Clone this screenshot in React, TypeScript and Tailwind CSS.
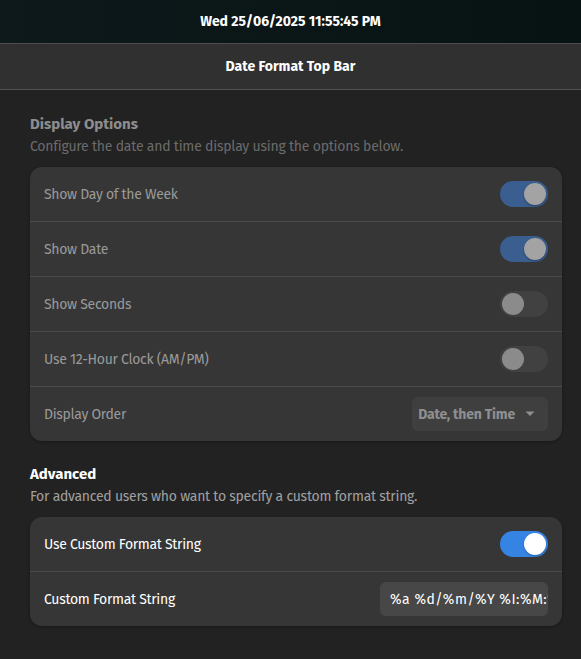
import React from "react";

const font = { fontFamily: '"Fira Sans", Lato, "Noto Sans", sans-serif' };

function Toggle({ on, dim }: { on: boolean; dim?: boolean }) {
  if (on) {
    return (
      <div className={`w-[48px] h-[26px] rounded-full flex items-center justify-end px-[2px] ${dim ? "bg-[#395e8f]" : "bg-[#3584e4]"}`}>
        <div className={`w-[22px] h-[22px] rounded-full ${dim ? "bg-[#a3a3a3]" : "bg-white"} shadow-[0_1px_2px_rgba(0,0,0,0.3)]`} />
      </div>
    );
  }
  return (
    <div className="w-[48px] h-[26px] rounded-full flex items-center justify-start px-[2px] bg-[#414141]">
      <div className="w-[22px] h-[22px] rounded-full bg-[#8b8b8b]" />
    </div>
  );
}

function Row({ label, children, dim, last }: { label: string; children: React.ReactNode; dim?: boolean; last?: boolean }) {
  return (
    <div className={`flex items-center justify-between pl-[14px] pr-[14px] ${last ? "h-[54px]" : "h-[55px] border-b border-[#4a4a4a]"}`}>
      <span className={`text-[14px] tracking-[-0.3px] ${dim ? "text-[#9a9a9a]" : "text-white"}`}>{label}</span>
      {children}
    </div>
  );
}

export default function App() {
  return (
    <div className="w-[581px] h-[659px] bg-[#222222] flex flex-col" style={font}>
      <div className="h-[44px] shrink-0 bg-[linear-gradient(90deg,#0d191a,#0a1616_60%,#071212)] flex items-center justify-center border-b border-[#4d4d4d]">
        <span className="text-white font-bold text-[14px]">Wed 25/06/2025 11:55:45 PM</span>
      </div>
      <div className="h-[46px] shrink-0 bg-[#303030] flex items-center justify-center border-b border-[#525252]">
        <span className="text-white font-bold text-[14px]">Date Format Top Bar</span>
      </div>
      <div className="pl-[30px] pr-[19px] pt-[23px]">
        <div className="text-[15px] font-bold text-[#8d8d8d] leading-[22px]">Display Options</div>
        <div className="text-[14px] tracking-[-0.22px] text-[#6b6b6b] leading-[22px] mt-[1px]">Configure the date and time display using the options below.</div>
        <div className="mt-[9px] rounded-[12px] bg-[#363636] overflow-hidden shadow-[0_1px_3px_rgba(0,0,0,0.3)]">
          <Row label="Show Day of the Week" dim><Toggle on dim /></Row>
          <Row label="Show Date" dim><Toggle on dim /></Row>
          <Row label="Show Seconds" dim><Toggle on={false} /></Row>
          <Row label="Use 12-Hour Clock (AM/PM)" dim><Toggle on={false} /></Row>
          <Row label="Display Order" dim last>
            <div className="w-[136px] h-[34px] rounded-[6px] bg-[#3f3f3f] flex items-center justify-end gap-[10px] pr-[13px]">
              <span className="text-[14px] font-bold tracking-[-0.2px] text-[#8f8f8f]">Date, then Time</span>
              <svg width="10" height="6" viewBox="0 0 10 6"><path d="M0.5 0.5 L9.5 0.5 L5 5 Z" fill="#8f8f8f" /></svg>
            </div>
          </Row>
        </div>
        <div className="mt-[22px] text-[15px] font-bold text-white leading-[22px]">Advanced</div>
        <div className="text-[14px] tracking-[-0.26px] text-[#a0a0a0] leading-[22px] mt-[1px]">For advanced users who want to specify a custom format string.</div>
        <div className="mt-[9px] rounded-[12px] bg-[#363636] overflow-hidden shadow-[0_1px_3px_rgba(0,0,0,0.3)]">
          <Row label="Use Custom Format String"><Toggle on /></Row>
          <Row label="Custom Format String" last>
            <div className="w-[168px] h-[34px] rounded-[6px] bg-[#474747] flex items-center px-[10px] overflow-hidden">
              <span className="text-[14px] text-white whitespace-nowrap tracking-[0.5px]">%a %d/%m/%Y %I:%M:%S %p</span>
            </div>
          </Row>
        </div>
      </div>
    </div>
  );
}
